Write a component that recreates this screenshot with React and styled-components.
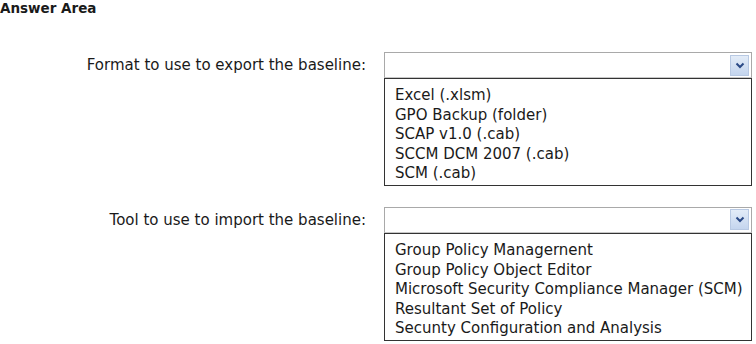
import React from "react";
import styled, { createGlobalStyle } from "styled-components";

const GlobalStyle = createGlobalStyle`
  body {
    margin: 0;
    background: #fff;
    font-family: "DejaVu Sans", Verdana, sans-serif;
    color: #1a1a1a;
  }
`;

const Page = styled.div`
  width: 756px;
  height: 344px;
  overflow: hidden;
`;

const Title = styled.div`
  font-weight: bold;
  font-size: 13.5px;
  height: 20px;
  line-height: 17px;
`;

const Row = styled.div`
  display: grid;
  grid-template-columns: 366px 368px;
  column-gap: 18px;
  margin-top: ${(props) => props.top}px;
`;

const Label = styled.div`
  text-align: right;
  font-size: 15px;
  padding-top: 4px;
`;

const Picker = styled.div`
  display: flex;
  flex-direction: column;
`;

const SelectBox = styled.div`
  height: 24px;
  border: 1px solid #a9a9a9;
  border-bottom-color: #c8c8c8;
  background: #fff;
  display: flex;
  justify-content: flex-end;
  align-items: center;
  padding-right: 2px;
`;

const ArrowButton = styled.div`
  width: 17px;
  height: 19px;
  background: linear-gradient(#e3ecf8, #c4d5ee);
  border: 1px solid #b8c9e3;
  display: flex;
  align-items: center;
  justify-content: center;
`;

const OptionList = styled.ul`
  list-style: none;
  margin: 0;
  padding: 7px 0 1px 10px;
  border: 1px solid #333;
  font-size: 15px;
`;

const Option = styled.li`
  height: 19.6px;
  line-height: 19.6px;
  white-space: nowrap;
`;

function Chevron() {
  return (
    <svg width="10" height="7" viewBox="0 0 10 7">
      <path d="M1.5 1.5 L5 5 L8.5 1.5" fill="none" stroke="#2b4a86" strokeWidth="2" />
    </svg>
  );
}

function Question({ label, options, top }) {
  return (
    <Row top={top}>
      <Label>{label}</Label>
      <Picker>
        <SelectBox>
          <ArrowButton>
            <Chevron />
          </ArrowButton>
        </SelectBox>
        <OptionList>
          {options.map((o) => (
            <Option key={o}>{o}</Option>
          ))}
        </OptionList>
      </Picker>
    </Row>
  );
}

export default function App() {
  return (
    <Page>
      <GlobalStyle />
      <Title>Answer Area</Title>
      <Question
        top={32}
        label="Format to use to export the baseline:"
        options={[
          "Excel (.xlsm)",
          "GPO Backup (folder)",
          "SCAP v1.0 (.cab)",
          "SCCM DCM 2007 (.cab)",
          "SCM (.cab)",
        ]}
      />
      <Question
        top={21}
        label="Tool to use to import the baseline:"
        options={[
          "Group Policy Managernent",
          "Group Policy Object Editor",
          "Microsoft Security Compliance Manager (SCM)",
          "Resultant Set of Policy",
          "Secunty Configuration and Analysis",
        ]}
      />
    </Page>
  );
}
